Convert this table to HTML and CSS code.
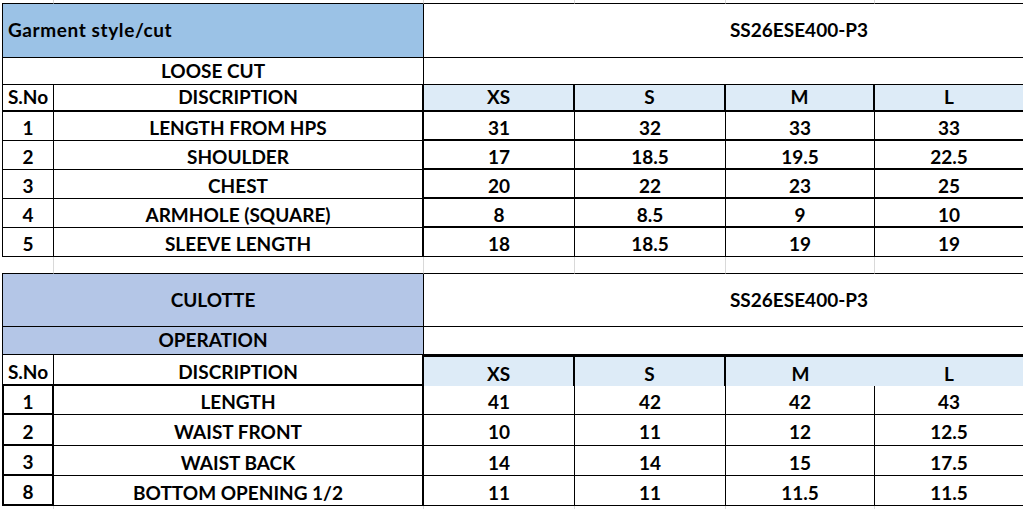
FILE: index.html
```html
<!DOCTYPE html>
<html lang="en">
<head>
<meta charset="utf-8">
<title>Measurement sheet</title>
<link rel="stylesheet" href="styles.css">
</head>
<body>
<div class="sheet">
  <div class="c ghost top"></div><div class="c ghost top"></div><div class="c ghost top"></div><div class="c ghost top"></div><div class="c ghost top"></div><div class="c ghost top end"></div>

  <div class="c title span2 hd">Garment style/cut</div>
  <div class="c code span4 hd">SS26ESE400-P3</div>

  <div class="c sub span2 hd">LOOSE CUT</div>
  <div class="c blank span4"></div>

  <div class="c sno head hd">S.No</div>
  <div class="c desc head hd">DISCRIPTION</div>
  <div class="c size hd">XS</div>
  <div class="c size hd">S</div>
  <div class="c size hd">M</div>
  <div class="c size end hd">L</div>

  <div class="c sno">1</div><div class="c desc">LENGTH FROM HPS</div><div class="c val thick">31</div><div class="c val thick">32</div><div class="c val thick">33</div><div class="c val thick end">33</div>
  <div class="c sno">2</div><div class="c desc">SHOULDER</div><div class="c val thick">17</div><div class="c val thick">18.5</div><div class="c val thick">19.5</div><div class="c val thick end">22.5</div>
  <div class="c sno">3</div><div class="c desc">CHEST</div><div class="c val thick">20</div><div class="c val thick">22</div><div class="c val thick">23</div><div class="c val thick end">25</div>
  <div class="c sno">4</div><div class="c desc">ARMHOLE (SQUARE)</div><div class="c val thick">8</div><div class="c val thick">8.5</div><div class="c val thick">9</div><div class="c val thick end">10</div>
  <div class="c sno">5</div><div class="c desc">SLEEVE LENGTH</div><div class="c val">18</div><div class="c val">18.5</div><div class="c val">19</div><div class="c val end">19</div>

  <div class="c ghost gap"></div><div class="c ghost gap"></div><div class="c ghost gap"></div><div class="c ghost gap"></div><div class="c ghost gap"></div><div class="c ghost gap end"></div>

  <div class="c sub culotte span2 hd">CULOTTE</div>
  <div class="c code span4 hd">SS26ESE400-P3</div>

  <div class="c sub culotte span2 hd">OPERATION</div>
  <div class="c blank span4"></div>

  <div class="c sno head">S.No</div>
  <div class="c desc head">DISCRIPTION</div>
  <div class="c size t2">XS</div>
  <div class="c size t2">S</div>
  <div class="c size t2 open">M</div>
  <div class="c size t2 end">L</div>

  <div class="c sno t2">1</div><div class="c desc">LENGTH</div><div class="c val">41</div><div class="c val">42</div><div class="c val">42</div><div class="c val end">43</div>
  <div class="c sno t2">2</div><div class="c desc">WAIST FRONT</div><div class="c val">10</div><div class="c val">11</div><div class="c val">12</div><div class="c val end">12.5</div>
  <div class="c sno t2">3</div><div class="c desc">WAIST BACK</div><div class="c val">14</div><div class="c val">14</div><div class="c val">15</div><div class="c val end">17.5</div>
  <div class="c sno t2">8</div><div class="c desc">BOTTOM OPENING 1/2</div><div class="c val">11</div><div class="c val">11</div><div class="c val">11.5</div><div class="c val end">11.5</div>

  <div class="c ghost"></div><div class="c ghost"></div><div class="c ghost"></div><div class="c ghost"></div><div class="c ghost"></div><div class="c ghost end"></div>
</div>
</body>
</html>
```

FILE: styles.css
```css
* {
  box-sizing: border-box;
}

html,
body {
  margin: 0;
  background: #ffffff;
  overflow: hidden;
}

body {
  padding-left: 2px;
  font-family: Lato, "Liberation Sans", sans-serif;
  font-weight: 700;
  font-size: 19px;
  color: #000000;
}

.sheet {
  display: grid;
  width: 1021px;
  grid-template-columns: 52px 370px 151px 151px 149px 1fr;
  grid-template-rows: 4px 54px 27px 27px 29px 29px 29px 29px 29px 17px 53px 28px 31px 29px 31px 30px 30px 4px;
}

.c {
  display: flex;
  align-items: center;
  justify-content: center;
  white-space: nowrap;
  line-height: 1;
  padding-top: 3px;
}

.c.hd {
  padding-top: 0;
  padding-bottom: 2px;
}

.span2 {
  grid-column: span 2;
}

.span4 {
  grid-column: span 4;
}

.ghost {
  border-right: 1px solid #d9d9d9;
}

.ghost.top {
  border-bottom: 1px solid #000000;
}

.ghost.gap {
  border-bottom: 1px solid #000000;
}

.ghost.end {
  border-right: none;
}

.title {
  background: #9bc2e6;
  border-left: 1px solid #000000;
  border-right: 1px solid #000000;
  border-bottom: 1px solid #000000;
  justify-content: flex-start;
  padding-left: 5px;
  letter-spacing: 0.6px;
}

.code {
  border-bottom: 1px solid #000000;
  padding-left: 151px;
}

.sub {
  border-left: 1px solid #000000;
  border-right: 1px solid #000000;
  border-bottom: 1px solid #000000;
}

.sub.culotte {
  background: #b4c6e7;
}

.blank {
  border-bottom: 1px solid #000000;
}

.sno {
  border-left: 1px solid #000000;
  border-right: 1px solid #000000;
  border-bottom: 1px solid #000000;
}

.sno.head {
  border-bottom-width: 2px;
}

.sno.t2 {
  border-left-width: 2px;
  border-right-width: 2px;
  border-bottom-width: 2px;
}

.desc {
  border-right: 2px solid #000000;
  border-bottom: 1px solid #000000;
}

.desc.head {
  border-bottom-width: 2px;
}

.size {
  background: #ddebf7;
  border-right: 2px solid #000000;
  border-bottom: 2px solid #000000;
}

.size.t2 {
  border-top: 2px solid #000000;
  border-bottom: none;
}

.size.open {
  border-right: none;
}

.val {
  border-right: 1px solid #000000;
  border-bottom: 1px solid #000000;
}

.val.thick {
  border-bottom-width: 2px;
}

.val.end,
.size.end {
  border-right: none;
}
```
